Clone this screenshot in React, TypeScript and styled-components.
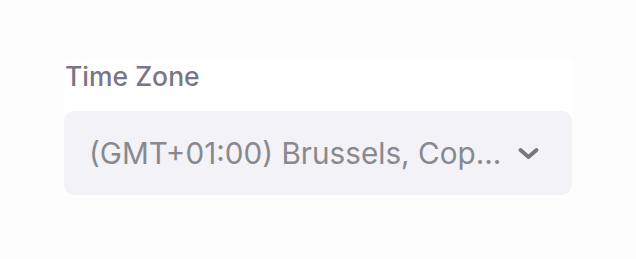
import React from "react"
import styled, { createGlobalStyle } from "styled-components"

const Global = createGlobalStyle`
  html, body {
    margin: 0;
    padding: 0;
    background: #fdfdfe;
    font-family: Inter, "Noto Sans", sans-serif;
  }
`

const Page = styled.div`
  width: 636px;
  height: 259px;
  padding: 60px 0 0 64px;
  box-sizing: border-box;
`

const Field = styled.div`
  width: 508px;
  background: #ffffff;
  display: flex;
  flex-direction: column;
  gap: 19px;
`

const Label = styled.label`
  font-size: 26.5px;
  font-weight: 500;
  line-height: 32px;
  color: #7a7688;
  padding-left: 1px;
`

const Select = styled.div`
  height: 84px;
  border-radius: 10px;
  background: #f3f2f7;
  display: flex;
  align-items: center;
  padding: 0 33px 0 25px;
  box-sizing: border-box;
  gap: 16px;
`

const Value = styled.span`
  flex: 1;
  font-size: 29.7px;
  color: #89898d;
  white-space: nowrap;
  overflow: hidden;
`

const Chevron = styled.svg`
  width: 21px;
  height: 13px;
  flex-shrink: 0;
`

export default function App() {
  return (
    <>
      <Global />
      <Page>
        <Field>
          <Label>Time Zone</Label>
          <Select>
            <Value>(GMT+01:00) Brussels, Cop...</Value>
            <Chevron viewBox="0 0 21 13">
              <path d="M2.5 3 L10.5 10 L18.5 3" fill="none" stroke="#77767c" strokeWidth="3.8" strokeLinecap="round" strokeLinejoin="round" />
            </Chevron>
          </Select>
        </Field>
      </Page>
    </>
  )
}
